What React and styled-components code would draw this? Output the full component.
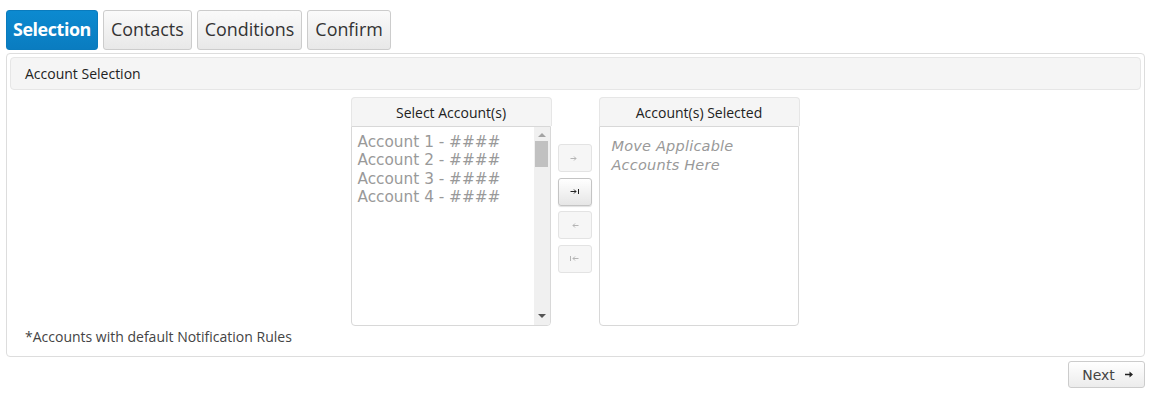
import React from "react";
import styled, { createGlobalStyle } from "styled-components";

const GlobalStyle = createGlobalStyle`
  body {
    margin: 0;
    background: #ffffff;
    font-family: "Open Sans", "Liberation Sans", sans-serif;
    color: #333333;
  }
`;

const Page = styled.div`
  padding: 10px 6px 0 6px;
  display: flex;
  flex-direction: column;
`;

const Tabs = styled.div`
  display: flex;
  gap: 5px;
`;

const Tab = styled.div`
  height: 40px;
  box-sizing: border-box;
  padding: 0 ${(p) => (p.$active ? "6px" : "7px")} 2px;
  display: flex;
  align-items: center;
  font-size: 17.9px;
  border-radius: 3px;
  border: 1px solid ${(p) => (p.$active ? "#0a7bbd" : "#cccccc")};
  background: ${(p) =>
    p.$active
      ? "linear-gradient(#0c8ad0, #0a7cc0)"
      : "linear-gradient(#fafafa, #e8e8e8)"};
  color: ${(p) => (p.$active ? "#ffffff" : "#333333")};
  font-weight: ${(p) => (p.$active ? 700 : 400)};
  letter-spacing: ${(p) => (p.$active ? "-0.42px" : "0")};
`;

const Panel = styled.div`
  margin-top: 3px;
  border: 1px solid #dddddd;
  border-radius: 4px;
  padding: 3px 3px 9px 3px;
`;

const PanelHeader = styled.div`
  height: 33px;
  box-sizing: border-box;
  background: #f5f5f5;
  border: 1px solid #e6e6e6;
  border-radius: 4px;
  padding-left: 14px;
  display: flex;
  align-items: center;
  font-size: 14px;
  color: #222222;
`;

const Picker = styled.div`
  display: flex;
  justify-content: center;
  margin-top: 7px;
  padding-right: 2px;
`;

const ListColumn = styled.div`
  width: 200px;
  display: flex;
  flex-direction: column;
`;

const ListHead = styled.div`
  height: 29px;
  box-sizing: border-box;
  width: 201px;
  background: #f5f5f5;
  border: 1px solid #e6e6e6;
  border-bottom: none;
  border-radius: 4px 4px 0 0;
  display: flex;
  align-items: center;
  justify-content: center;
  font-size: 14px;
  color: #222222;
`;

const ListBox = styled.div`
  height: 200px;
  box-sizing: border-box;
  border: 1px solid #d8d8d8;
  border-radius: 0 0 4px 4px;
  display: flex;
  overflow: hidden;
`;

const Items = styled.div`
  flex: 1;
  font-family: "DejaVu Sans", Verdana, sans-serif;
  color: #999999;
  font-style: ${(p) => (p.$hint ? "oblique" : "normal")};
  font-size: ${(p) => (p.$hint ? "14.5px" : "15.3px")};
  padding-top: ${(p) => (p.$hint ? "10px" : "6px")};
  padding-left: ${(p) => (p.$hint ? "12px" : "6px")};
  line-height: ${(p) => (p.$hint ? "19px" : "18.3px")};
  letter-spacing: ${(p) => (p.$hint ? "0.2px" : "0")};
`;

const Scrollbar = styled.div`
  width: 16px;
  background: #f0f0f0;
  display: flex;
  flex-direction: column;
  align-items: center;
`;

const Arrow = styled.div`
  width: 0;
  height: 0;
  border-left: 4px solid transparent;
  border-right: 4px solid transparent;
  ${(p) =>
    p.$down
      ? `border-top: 4px solid #555555; margin-top: auto; margin-bottom: 7px;`
      : `border-bottom: 4px solid #a3a3a3; margin-top: 6px;`}
`;

const Thumb = styled.div`
  width: 13px;
  height: 26px;
  background: #c1c1c1;
  margin-top: 4px;
`;

const Moves = styled.div`
  margin: 47px 7px 0 7px;
  display: flex;
  flex-direction: column;
  gap: 5.5px;
`;

const MoveButton = styled.div`
  width: 34px;
  height: 28px;
  box-sizing: border-box;
  border-radius: 3px;
  border: 1px solid ${(p) => (p.$on ? "#c4c4c4" : "#e3e3e3")};
  background: ${(p) => (p.$on ? "linear-gradient(#ffffff, #e6e6e6)" : "#f6f6f6")};
  box-shadow: ${(p) => (p.$on ? "0 1px 1px rgba(0,0,0,0.12)" : "none")};
  color: ${(p) => (p.$on ? "#222222" : "#b5b5b5")};
  display: flex;
  align-items: center;
  justify-content: center;
`;

const MoveIcon = ({ dir, bar }) => {
  const right = dir === "right";
  return (
    <svg width="9" height="7" viewBox="0 0 9 7" fill="none" stroke="currentColor" strokeWidth="1">
      {right ? (
        <>
          <path d="M0.5 3.5H6M4 1.5L6 3.5L4 5.5" />
          {bar && <path d="M8.5 1V6" />}
        </>
      ) : (
        <>
          <path d="M8.5 3.5H3M5 1.5L3 3.5L5 5.5" />
          {bar && <path d="M0.5 1V6" />}
        </>
      )}
    </svg>
  );
};

const Note = styled.div`
  padding: 1px 0 0 15px;
  font-size: 14px;
  line-height: 20px;
  color: #444444;
`;

const Footer = styled.div`
  display: flex;
  justify-content: flex-end;
  margin-top: 4px;
`;

const NextButton = styled.div`
  width: 77px;
  height: 27px;
  box-sizing: border-box;
  border: 1px solid #cccccc;
  border-radius: 3px;
  background: linear-gradient(#ffffff, #ececec);
  display: flex;
  align-items: center;
  justify-content: center;
  gap: 10px;
  padding-left: 2px;
  font-family: "DejaVu Sans", Verdana, sans-serif;
  font-size: 14px;
  color: #444444;
`;

const NextArrow = () => (
  <svg width="8" height="7" viewBox="0 0 8 7">
    <path d="M0 2.7H4.5V0.5L8 3.5L4.5 6.5V4.3H0Z" fill="#222222" />
  </svg>
);

const accounts = ["Account 1 - ####", "Account 2 - ####", "Account 3 - ####", "Account 4 - ####"];

export default function App() {
  return (
    <Page>
      <GlobalStyle />
      <Tabs>
        <Tab $active>Selection</Tab>
        <Tab>Contacts</Tab>
        <Tab>Conditions</Tab>
        <Tab>Confirm</Tab>
      </Tabs>
      <Panel>
        <PanelHeader>Account Selection</PanelHeader>
        <Picker>
          <ListColumn>
            <ListHead>Select Account(s)</ListHead>
            <ListBox>
              <Items>
                {accounts.map((a) => (
                  <div key={a}>{a}</div>
                ))}
              </Items>
              <Scrollbar>
                <Arrow />
                <Thumb />
                <Arrow $down />
              </Scrollbar>
            </ListBox>
          </ListColumn>
          <Moves>
            <MoveButton>
              <MoveIcon dir="right" />
            </MoveButton>
            <MoveButton $on>
              <MoveIcon dir="right" bar />
            </MoveButton>
            <MoveButton>
              <MoveIcon dir="left" />
            </MoveButton>
            <MoveButton>
              <MoveIcon dir="left" bar />
            </MoveButton>
          </Moves>
          <ListColumn>
            <ListHead>Account(s) Selected</ListHead>
            <ListBox>
              <Items $hint>
                Move Applicable
                <br />
                Accounts Here
              </Items>
            </ListBox>
          </ListColumn>
        </Picker>
        <Note>*Accounts with default Notification Rules</Note>
      </Panel>
      <Footer>
        <NextButton>
          Next <NextArrow />
        </NextButton>
      </Footer>
    </Page>
  );
}
